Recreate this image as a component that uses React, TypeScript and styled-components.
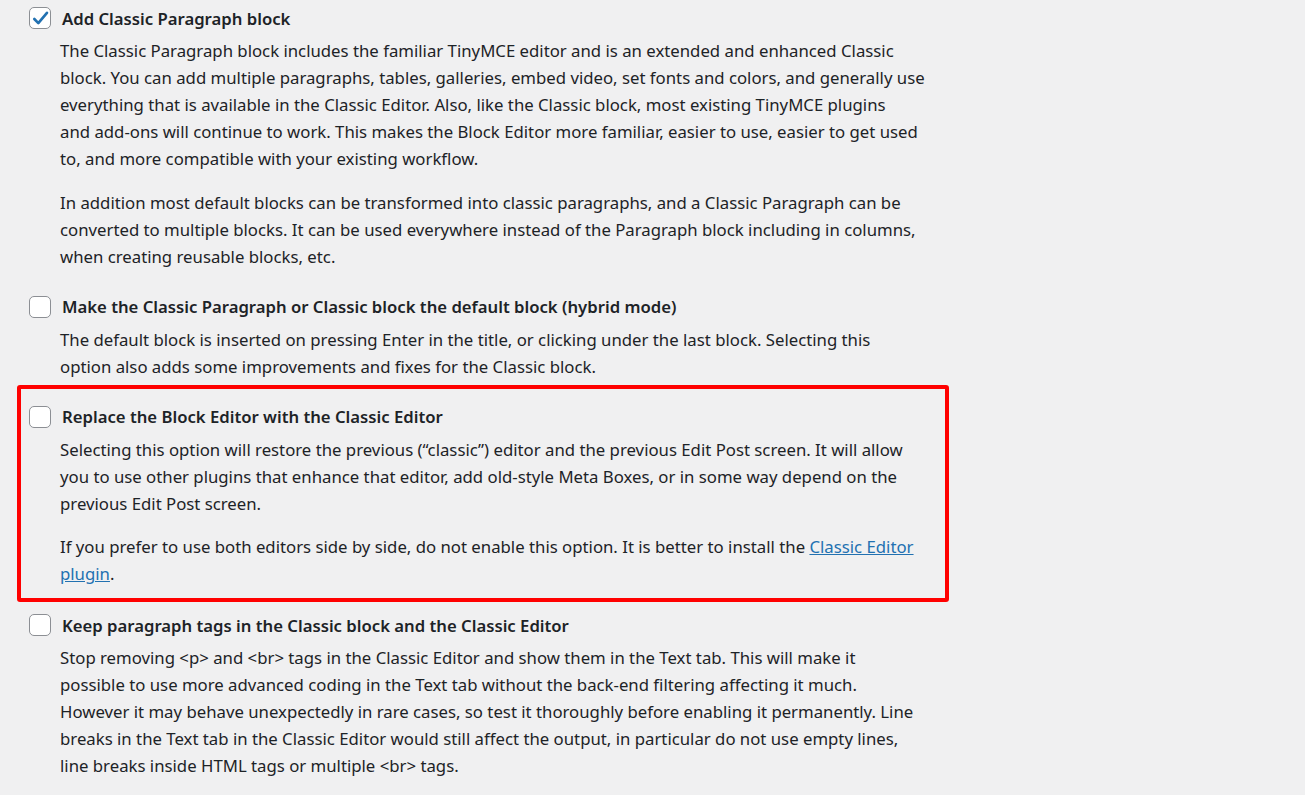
import React from "react";
import styled, { createGlobalStyle } from "styled-components";

const Global = createGlobalStyle`
  html, body {
    margin: 0;
    background: #f0f0f1;
  }
  body {
    font-family: "Noto Sans", "Open Sans", sans-serif;
    color: #1d2327;
  }
`;

const Page = styled.div`
  padding: 4px 0 0 29px;
  width: 900px;
`;

const Option = styled.div<{ $marked?: boolean }>`
  position: relative;
  padding-bottom: ${(p) => (p.$marked ? 24 : 23)}px;
`;

// red annotation frame drawn over the third option
const Highlight = styled.div`
  position: absolute;
  left: -12px;
  top: -18px;
  width: 924px;
  height: 209px;
  border: 4px solid #ff0000;
  border-radius: 3px;
  pointer-events: none;
`;

const Label = styled.label`
  display: flex;
  align-items: center;
  gap: 11px;
  height: 28px;
  font-size: 16.7px;
  font-weight: 600;
  cursor: pointer;
`;

const Box = styled.span`
  width: 20px;
  height: 20px;
  flex: none;
  border: 1px solid #8c8f94;
  border-radius: 5px;
  background: #fff;
  display: flex;
  align-items: center;
  justify-content: center;
`;

const Desc = styled.div`
  margin-left: 31px;
  padding-top: 5px;
  font-size: 16.75px;
  line-height: 27px;
  white-space: nowrap;

  p {
    margin: 0 0 16.5px;
  }
  p:last-child {
    margin-bottom: 0;
  }
  a {
    color: #2271b1;
  }
`;

const Check = () => (
  <svg width="19" height="19" viewBox="0 0 20 20">
    <path d="M3.5 10.5l4.2 4.3L16.8 4" fill="none" stroke="#2271b1" strokeWidth="2.8" strokeLinecap="round" strokeLinejoin="round" />
  </svg>
);

const Checkbox = ({ checked }: { checked?: boolean }) => <Box>{checked && <Check />}</Box>;

// keeps the line breaks the reference shows
const Lines = ({ lines }: { lines: React.ReactNode[] }) => (
  <p>
    {lines.map((l, i) => (
      <React.Fragment key={i}>
        {i > 0 && <br />}
        {l}
      </React.Fragment>
    ))}
  </p>
);

type Item = { title: string; checked?: boolean; marked?: boolean; paras: React.ReactNode[][] };

const items: Item[] = [
  {
    title: "Add Classic Paragraph block",
    checked: true,
    paras: [
      [
        "The Classic Paragraph block includes the familiar TinyMCE editor and is an extended and enhanced Classic",
        "block. You can add multiple paragraphs, tables, galleries, embed video, set fonts and colors, and generally use",
        "everything that is available in the Classic Editor. Also, like the Classic block, most existing TinyMCE plugins",
        "and add-ons will continue to work. This makes the Block Editor more familiar, easier to use, easier to get used",
        "to, and more compatible with your existing workflow.",
      ],
      [
        "In addition most default blocks can be transformed into classic paragraphs, and a Classic Paragraph can be",
        "converted to multiple blocks. It can be used everywhere instead of the Paragraph block including in columns,",
        "when creating reusable blocks, etc.",
      ],
    ],
  },
  {
    title: "Make the Classic Paragraph or Classic block the default block (hybrid mode)",
    paras: [
      [
        "The default block is inserted on pressing Enter in the title, or clicking under the last block. Selecting this",
        "option also adds some improvements and fixes for the Classic block.",
      ],
    ],
  },
  {
    title: "Replace the Block Editor with the Classic Editor",
    marked: true,
    paras: [
      [
        "Selecting this option will restore the previous (“classic”) editor and the previous Edit Post screen. It will allow",
        "you to use other plugins that enhance that editor, add old-style Meta Boxes, or in some way depend on the",
        "previous Edit Post screen.",
      ],
      [
        <>
          If you prefer to use both editors side by side, do not enable this option. It is better to install the{" "}
          <a href="#">Classic Editor</a>
        </>,
        <>
          <a href="#">plugin</a>.
        </>,
      ],
    ],
  },
  {
    title: "Keep paragraph tags in the Classic block and the Classic Editor",
    paras: [
      [
        "Stop removing <p> and <br> tags in the Classic Editor and show them in the Text tab. This will make it",
        "possible to use more advanced coding in the Text tab without the back-end filtering affecting it much.",
        "However it may behave unexpectedly in rare cases, so test it thoroughly before enabling it permanently. Line",
        "breaks in the Text tab in the Classic Editor would still affect the output, in particular do not use empty lines,",
        "line breaks inside HTML tags or multiple <br> tags.",
      ],
    ],
  },
];

export default function App() {
  return (
    <Page>
      <Global />
      {items.map((item) => (
        <Option key={item.title} $marked={item.marked}>
          {item.marked && <Highlight />}
          <Label>
            <Checkbox checked={item.checked} />
            {item.title}
          </Label>
          <Desc>
            {item.paras.map((lines, i) => (
              <Lines key={i} lines={lines} />
            ))}
          </Desc>
        </Option>
      ))}
    </Page>
  );
}
